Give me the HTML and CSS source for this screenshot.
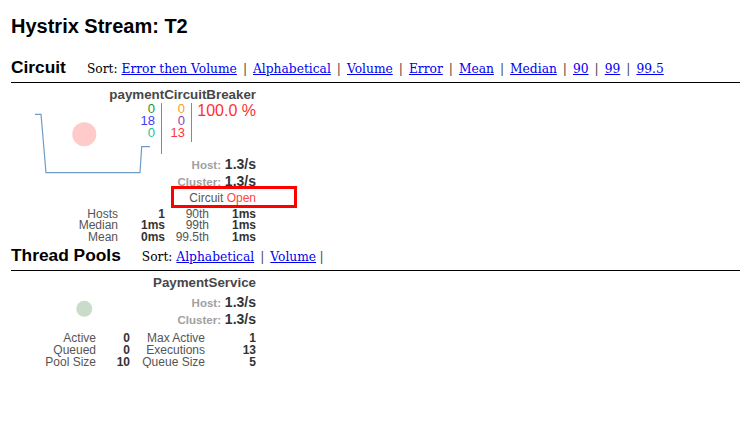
FILE: index.html
```html
<!DOCTYPE html>
<html>
<head>
<meta charset="utf-8">
<title>Hystrix Stream: T2</title>
<link rel="stylesheet" href="styles.css">
</head>
<body>
<div class="page">
  <h1 class="title">Hystrix Stream: T2</h1>

  <div class="section-head">
    <h2 class="section-title">Circuit</h2>
    <div class="sort">Sort: <a href="#">Error then Volume</a><span class="sep">|</span><a href="#">Alphabetical</a><span class="sep">|</span><a href="#">Volume</a><span class="sep">|</span><a href="#">Error</a><span class="sep">|</span><a href="#">Mean</a><span class="sep">|</span><a href="#">Median</a><span class="sep">|</span><a href="#">90</a><span class="sep">|</span><a href="#">99</a><span class="sep">|</span><a href="#">99.5</a></div>
  </div>

  <div class="monitor circuit">
    <svg class="chart" width="245" height="150" viewBox="0 0 245 150">
      <polyline points="24,31.3 30,31.3 35,89.7 129,89.7 130.7,63.7 139,63.7" fill="none" stroke="#6f9bc6" stroke-width="1.2"/>
      <circle cx="73.3" cy="51.3" r="12" fill="#ffcaca"/>
    </svg>
    <p class="name">paymentCircuitBreaker</p>
    <div class="counters">
      <div class="col col1"><span class="success">0</span><span class="short">18</span><span class="bad">0</span></div>
      <div class="col col2"><span class="timeout">0</span><span class="rejected">0</span><span class="failure">13</span></div>
      <div class="pct">100.0 %</div>
    </div>
    <div class="rate"><span class="label">Host:</span> 1.3/s</div>
    <div class="rate"><span class="label">Cluster:</span> 1.3/s</div>
    <div class="status">Circuit <span class="open">Open</span></div>
    <div class="table circuit-table">
      <span class="hd">Hosts</span><span class="dt">1</span><span class="hd">90th</span><span class="dt">1ms</span>
      <span class="hd">Median</span><span class="dt">1ms</span><span class="hd">99th</span><span class="dt">1ms</span>
      <span class="hd">Mean</span><span class="dt">0ms</span><span class="hd">99.5th</span><span class="dt">1ms</span>
    </div>
    <div class="highlight"></div>
  </div>

  <div class="section-head pools-head">
    <h2 class="section-title">Thread Pools</h2>
    <div class="sort">Sort: <a href="#">Alphabetical</a><span class="sep">|</span><a href="#">Volume</a><span class="sep-end">|</span></div>
  </div>

  <div class="monitor pool">
    <svg class="chart" width="245" height="100" viewBox="0 0 245 100">
      <circle cx="73.3" cy="37.8" r="8" fill="#cbdbca"/>
    </svg>
    <p class="name">PaymentService</p>
    <div class="rate pool-rate"><span class="label">Host:</span> 1.3/s</div>
    <div class="rate"><span class="label">Cluster:</span> 1.3/s</div>
    <div class="table pool-table">
      <span class="hd">Active</span><span class="dt">0</span><span class="hd">Max Active</span><span class="dt">1</span>
      <span class="hd">Queued</span><span class="dt">0</span><span class="hd">Executions</span><span class="dt">13</span>
      <span class="hd">Pool Size</span><span class="dt">10</span><span class="hd">Queue Size</span><span class="dt">5</span>
    </div>
  </div>
</div>
</body>
</html>
```

FILE: styles.css
```css
html, body {
  margin: 0;
  padding: 0;
  background: #ffffff;
}

body {
  font-family: "Liberation Sans", Arial, sans-serif;
  color: #000;
}

.page {
  padding: 14px 0 0 11px;
}

.title {
  margin: 0;
  font-size: 20px;
  line-height: 24px;
  font-weight: bold;
}

.section-head {
  display: flex;
  align-items: baseline;
  margin-top: 19px;
  padding-bottom: 5px;
  border-bottom: 1px solid #000;
}

.pools-head {
  margin-top: 1.5px;
}

.section-title {
  margin: 0;
  font-size: 17.33px;
  line-height: 20px;
  font-weight: bold;
}

.sort {
  margin-left: 21px;
  font-family: "DejaVu Serif", serif;
  font-size: 12.25px;
  line-height: 16px;
  color: #000;
  white-space: nowrap;
}

.sort a {
  color: #0000ee;
  text-decoration: underline;
}

.sep {
  padding: 0 6px;
  color: #444;
}

.sep-end {
  padding-left: 3.5px;
  color: #444;
}

.monitor {
  position: relative;
  width: 245px;
  padding-top: 4px;
}

.chart {
  position: absolute;
  left: 0;
  top: 0;
}

.name {
  position: relative;
  margin: 0;
  text-align: right;
  font-size: 13.33px;
  line-height: 15px;
  font-weight: bold;
  color: #474747;
}

.counters {
  position: relative;
  display: flex;
  justify-content: flex-end;
  margin-top: 1px;
  font-size: 13px;
  line-height: 12px;
}

.col {
  box-sizing: border-box;
  width: 30px;
  padding-right: 6px;
  text-align: right;
  border-right: 1px solid #8a8a8a;
}

.col span {
  display: block;
}

.col1 {
  height: 51px;
}

.col2 {
  height: 39px;
}

.pct {
  width: 64px;
  text-align: right;
  font-size: 16px;
  line-height: 16px;
  color: #ff3030;
}

.success { color: #22962a; }
.short { color: #3c3cff; }
.bad { color: #1cc09c; }
.timeout { color: #ff9c1a; }
.rejected { color: #8e3fae; }
.failure { color: #ff3535; }

.rate {
  position: relative;
  text-align: right;
  font-size: 14px;
  line-height: 17px;
  font-weight: bold;
  color: #333;
}

.counters + .rate {
  margin-top: 2px;
}

.pool-rate {
  margin-top: 4px;
}

.rate .label {
  font-size: 11.5px;
  line-height: 1;
  color: #a0a0a0;
}

.status {
  text-align: right;
  font-size: 12px;
  line-height: 17px;
  color: #555;
}

.status .open {
  color: #ff4444;
}

.table {
  display: grid;
  font-size: 12px;
  text-align: right;
  white-space: nowrap;
}

.table .hd {
  color: #555;
}

.table .dt {
  font-weight: bold;
  color: #333;
}

.circuit-table {
  grid-template-columns: 107px 47px 44px 47px;
  margin-top: 1.5px;
  line-height: 11.5px;
}

.pool-table {
  grid-template-columns: 85px 34px 75px 51px;
  margin-top: 4px;
  line-height: 12px;
}

.highlight {
  position: absolute;
  left: 160px;
  top: 103px;
  width: 126px;
  height: 22px;
  box-sizing: border-box;
  border: 3.5px solid #ff0000;
}
```
